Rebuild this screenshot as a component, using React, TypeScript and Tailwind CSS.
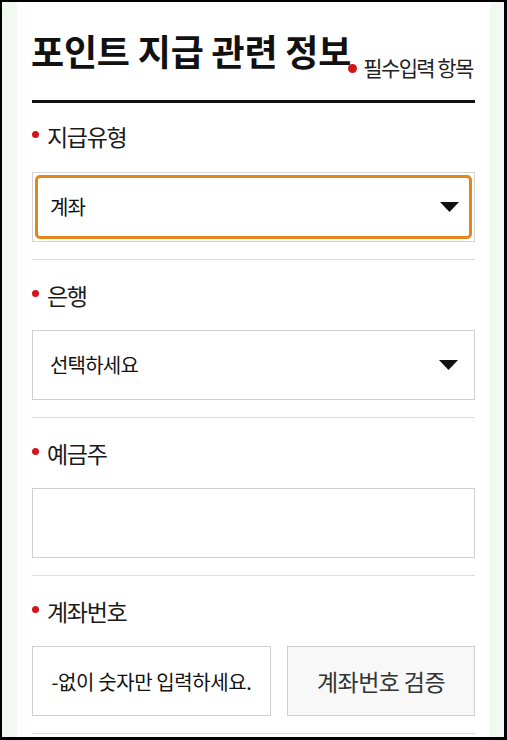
import React, { useState } from 'react';

const font = { fontFamily: '"Noto Sans CJK KR", "Noto Sans", sans-serif' };

function Label({ text }: { text: string }) {
  return (
    <div className="flex items-center h-[28px]">
      <span className="w-[7px] h-[7px] rounded-full bg-[#d2161b] mr-[8px] -mt-[4px]" />
      <span className="text-[23px] leading-[28px] tracking-[-1.3px] text-[#1a1a1a]">{text}</span>
    </div>
  );
}

function Caret() {
  return (
    <svg width="19" height="10" viewBox="0 0 19 10" className="shrink-0">
      <path d="M0 0 H19 L9.5 10 Z" fill="#111" />
    </svg>
  );
}

export default function App() {
  const [holder, setHolder] = useState('');
  const [account, setAccount] = useState('');

  return (
    <div
      style={font}
      className="w-[507px] h-[740px] overflow-hidden bg-[#f2f9f0] border-l-2 border-t-2 border-r-[3px] border-b-[3px] border-black pl-[15px] pr-[14px]"
    >
      <div className="h-full bg-white px-[15px] pt-[28px]">
        {/* 제목 */}
        <div className="flex items-start h-[48px]">
          <h2 className="text-[36px] leading-[40px] font-bold tracking-[-0.2px] text-[#111] whitespace-nowrap -ml-[1px]">
            포인트 지급 관련 정보
          </h2>
          <span className="w-[9px] h-[9px] rounded-full bg-[#d2161b] mt-[34px] -ml-[3px] shrink-0" />
          <span className="ml-[6px] mt-[25px] text-[21px] leading-[24px] tracking-[-1.6px] text-[#222] whitespace-nowrap">
            필수입력 항목
          </span>
        </div>
        <div className="h-[3px] bg-[#111] mt-[22px]" />

        {/* 지급유형 */}
        <div className="pt-[19px] pb-[17px] border-b border-[#dcdcdc]">
          <Label text="지급유형" />
          <div className="mt-[22px] h-[70px] border border-[#d4d4d4] p-[2px]">
            <div className="h-full border-[3px] border-[#e3861b] rounded-[5px] flex items-center justify-between pl-[12px] pr-[10px]">
              <span className="text-[20px] tracking-[-1px] text-[#111]">계좌</span>
              <Caret />
            </div>
          </div>
        </div>

        {/* 은행 */}
        <div className="pt-[21px] pb-[17px] border-b border-[#dcdcdc]">
          <Label text="은행" />
          <div className="mt-[21px] h-[70px] border border-[#cfcfcf] flex items-center justify-between pl-[17px] pr-[16px]">
            <span className="text-[20px] tracking-[-0.8px] text-[#111]">선택하세요</span>
            <Caret />
          </div>
        </div>

        {/* 예금주 */}
        <div className="pt-[21px] pb-[17px] border-b border-[#dcdcdc]">
          <Label text="예금주" />
          <input
            value={holder}
            onChange={(e) => setHolder(e.target.value)}
            className="mt-[21px] block w-full h-[70px] border border-[#cfcfcf] px-[16px] text-[20px] outline-none"
          />
        </div>

        {/* 계좌번호 */}
        <div className="pt-[21px] pb-[17px] border-b border-[#dcdcdc]">
          <Label text="계좌번호" />
          <div className="mt-[21px] flex gap-[16px]">
            <input
              value={account}
              onChange={(e) => setAccount(e.target.value)}
              placeholder="-없이 숫자만 입력하세요."
              className="w-[239px] h-[70px] border border-[#cfcfcf] text-center text-[20px] tracking-[-0.4px] outline-none placeholder:text-[#111]"
            />
            <button
              type="button"
              className="flex-1 h-[70px] border border-[#cfcfcf] bg-[#f8f8f8] text-[23px] tracking-[-0.6px] text-[#333]"
            >
              계좌번호 검증
            </button>
          </div>
        </div>
      </div>
    </div>
  );
}
